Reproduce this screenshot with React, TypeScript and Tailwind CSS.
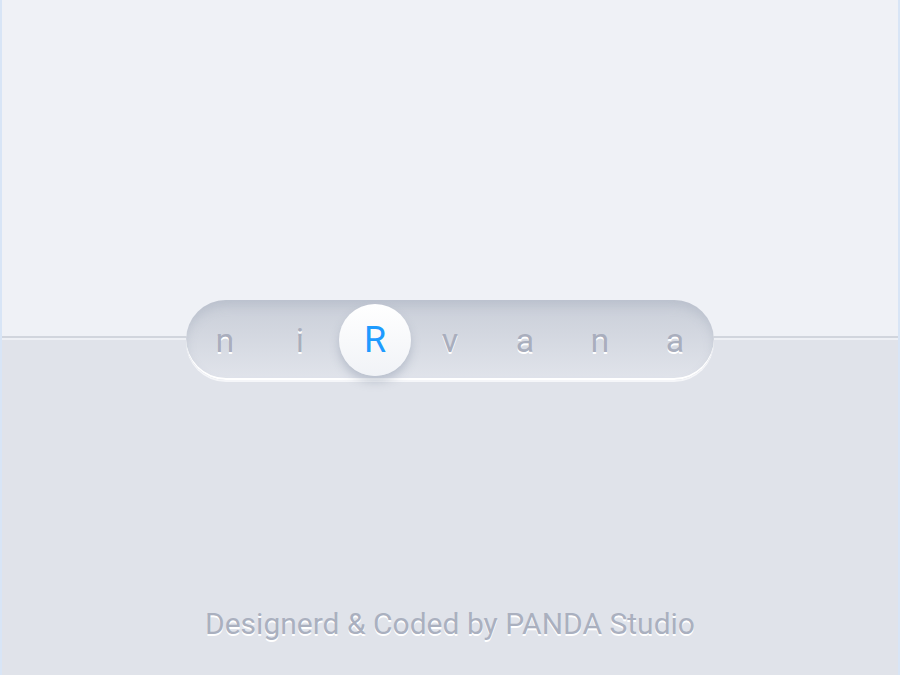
import React from "react";

const letters = ["n", "i", "R", "v", "a", "n", "a"];

export default function App() {
  return (
    <div
      className="relative flex h-[675px] w-[900px] flex-col overflow-hidden border-x-2 border-[#d8e5f6]"
      style={{ fontFamily: "Roboto, 'Noto Sans', sans-serif" }}
    >
      <div className="h-[336px] bg-[#eff1f6]" />
      <div className="h-[2px] bg-[#d1d5dd]" />
      <div className="h-[2px] bg-[#eef0f5]" />
      <div className="flex flex-1 flex-col items-center justify-end bg-[#e0e3ea] pb-[36px]">
        <p className="text-[30px] leading-none text-[#aab0bf] [text-shadow:0_2px_0_#ffffff]">
          Designerd &amp; Coded by PANDA Studio
        </p>
      </div>

      <div className="absolute left-[184px] top-[300px] flex h-[80px] w-[528px] items-center justify-center rounded-full bg-gradient-to-b from-[#c9ced8] to-[#e1e4eb] shadow-[inset_0_-2px_0_#ffffff,inset_0_6px_10px_rgba(160,168,185,0.35),0_2px_0_#f5f6f9]">
        {letters.map((l, i) =>
          l === "R" ? (
            <div key={i} className="flex w-[75px] justify-center">
              <div className="flex h-[72px] w-[72px] items-center justify-center rounded-full bg-gradient-to-b from-[#ffffff] to-[#f1f3f7] text-[36px] text-[#1e9bff] shadow-[0_6px_10px_rgba(140,150,170,0.45)]">
                {l}
              </div>
            </div>
          ) : (
            <div
              key={i}
              className="flex h-[72px] w-[75px] items-center justify-center text-[34px] text-[#a9aebd] [text-shadow:0_2px_0_#ffffff]"
            >
              {l}
            </div>
          )
        )}
      </div>
    </div>
  );
}
